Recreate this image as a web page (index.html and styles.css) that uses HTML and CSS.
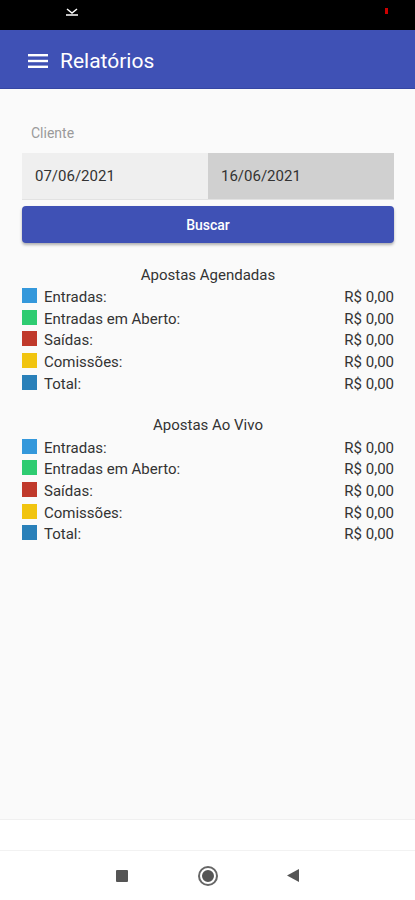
FILE: index.html
```html
<!DOCTYPE html>
<html lang="pt-BR">
<head>
    <meta charset="UTF-8">
    <title>Relatórios</title>
    <link rel="stylesheet" href="styles.css">
</head>
<body>

<div id="wrapper">
    <div class="statusbar">
        <svg class="status-icon" width="12" height="8" viewBox="0 0 12 8">
            <path d="M1 1 L6 5 L11 1 M0 7 H12" stroke="#fff" stroke-width="1.5" fill="none"/>
        </svg>
        <span class="status-dot"></span>
    </div>

    <header class="appbar">
        <svg class="menu-icon" width="20" height="14" viewBox="0 0 20 14">
            <rect x="0" y="0" width="20" height="2.4" fill="#fff"/>
            <rect x="0" y="5.8" width="20" height="2.4" fill="#fff"/>
            <rect x="0" y="11.6" width="20" height="2.4" fill="#fff"/>
        </svg>
        <h1>Relatórios</h1>
    </header>

    <main class="conteudo">
        <div class="label">Cliente</div>

        <div class="datas">
            <div class="data">07/06/2021</div>
            <div class="data data-fim">16/06/2021</div>
        </div>

        <button class="buscar">Buscar</button>

        <section class="relatorio">
            <h2>Apostas Agendadas</h2>
            <div class="linha"><span class="cor azul"></span><span class="nome">Entradas:</span><span class="valor">R$ 0,00</span></div>
            <div class="linha"><span class="cor verde"></span><span class="nome">Entradas em Aberto:</span><span class="valor">R$ 0,00</span></div>
            <div class="linha"><span class="cor vermelho"></span><span class="nome">Saídas:</span><span class="valor">R$ 0,00</span></div>
            <div class="linha"><span class="cor amarelo"></span><span class="nome">Comissões:</span><span class="valor">R$ 0,00</span></div>
            <div class="linha"><span class="cor azul-escuro"></span><span class="nome">Total:</span><span class="valor">R$ 0,00</span></div>
        </section>

        <section class="relatorio">
            <h2>Apostas Ao Vivo</h2>
            <div class="linha"><span class="cor azul"></span><span class="nome">Entradas:</span><span class="valor">R$ 0,00</span></div>
            <div class="linha"><span class="cor verde"></span><span class="nome">Entradas em Aberto:</span><span class="valor">R$ 0,00</span></div>
            <div class="linha"><span class="cor vermelho"></span><span class="nome">Saídas:</span><span class="valor">R$ 0,00</span></div>
            <div class="linha"><span class="cor amarelo"></span><span class="nome">Comissões:</span><span class="valor">R$ 0,00</span></div>
            <div class="linha"><span class="cor azul-escuro"></span><span class="nome">Total:</span><span class="valor">R$ 0,00</span></div>
        </section>
    </main>

    <div class="rodape"></div>

    <nav class="navbar">
        <span class="nav-quadrado"></span>
        <span class="nav-circulo"></span>
        <svg class="nav-voltar" width="12" height="13" viewBox="0 0 12 13">
            <path d="M12 0 L0 6.5 L12 13 Z" fill="#555"/>
        </svg>
    </nav>
</div>

</body>
</html>
```

FILE: styles.css
```css
html, body {
    margin: 0;
    padding: 0;
    width: 415px;
    height: 900px;
    font-family: Roboto, "Noto Sans", sans-serif;
    background: #fafafa;
    color: #333;
}

#wrapper {
    display: flex;
    flex-direction: column;
    height: 900px;
}

.statusbar {
    height: 30px;
    background: #000;
    display: flex;
    align-items: center;
    justify-content: space-between;
    padding: 0 27px 0 66px;
}

.status-icon {
    margin-top: -6px;
}

.status-dot {
    width: 3px;
    height: 6px;
    background: #c00;
    margin-top: -8px;
}

.appbar {
    height: 59px;
    background: #3f51b5;
    display: flex;
    align-items: center;
    padding-left: 28px;
    box-sizing: border-box;
    border-bottom: 1px solid #3546a3;
}

.menu-icon {
    margin-top: 3px;
}

.appbar h1 {
    margin: 3px 0 0 12px;
    font-size: 21px;
    font-weight: 400;
    color: #fff;
}

.conteudo {
    flex: 1;
    padding: 34px 21px 0 22px;
}

.label {
    font-size: 14px;
    line-height: 20px;
    color: #9a9a9a;
    padding-left: 9px;
}

.datas {
    display: flex;
    margin-top: 10px;
    height: 46px;
    border-bottom: 1px solid #e2e2e2;
}

.data {
    flex: 1;
    background: #efefef;
    font-size: 15px;
    display: flex;
    align-items: center;
    padding-left: 13px;
    color: #333;
}

.data-fim {
    background: #d0d0d0;
}

.buscar {
    display: block;
    width: 100%;
    height: 37px;
    margin-top: 6px;
    background: #3f51b5;
    border: none;
    border-radius: 4px;
    color: #fff;
    font-family: Roboto, sans-serif;
    font-size: 14px;
    font-weight: 500;
    box-shadow: 0 2px 3px rgba(0,0,0,0.3);
}

.relatorio {
    margin-top: 22px;
}

.relatorio + .relatorio {
    margin-top: 21px;
}

.relatorio h2 {
    margin: 0;
    text-align: center;
    font-size: 15px;
    font-weight: 400;
    line-height: 21.5px;
    color: #333;
}

.linha {
    display: flex;
    align-items: center;
    height: 21.6px;
    font-size: 15px;
}

.cor {
    width: 15px;
    height: 15px;
    margin-right: 7px;
    margin-top: -3px;
}

.azul { background: #3498db; }
.verde { background: #2ecc71; }
.vermelho { background: #c0392b; }
.amarelo { background: #f1c40f; }
.azul-escuro { background: #2980b9; }

.nome {
    flex: 1;
}

.valor {
    text-align: right;
}

.rodape {
    height: 30px;
    background: #fff;
    border-top: 1px solid #f0f0f0;
}

.navbar {
    height: 50px;
    background: #fff;
    border-top: 1px solid #f2f2f2;
    display: flex;
    align-items: center;
    padding-left: 116px;
    box-sizing: border-box;
}

.nav-quadrado {
    width: 12px;
    height: 12px;
    background: #555;
    border-radius: 1px;
}

.nav-circulo {
    width: 12px;
    height: 12px;
    border-radius: 50%;
    background: #555;
    border: 2px solid #fff;
    box-shadow: 0 0 0 2px #666;
    margin-left: 72px;
}

.nav-voltar {
    margin-left: 71px;
}
```
